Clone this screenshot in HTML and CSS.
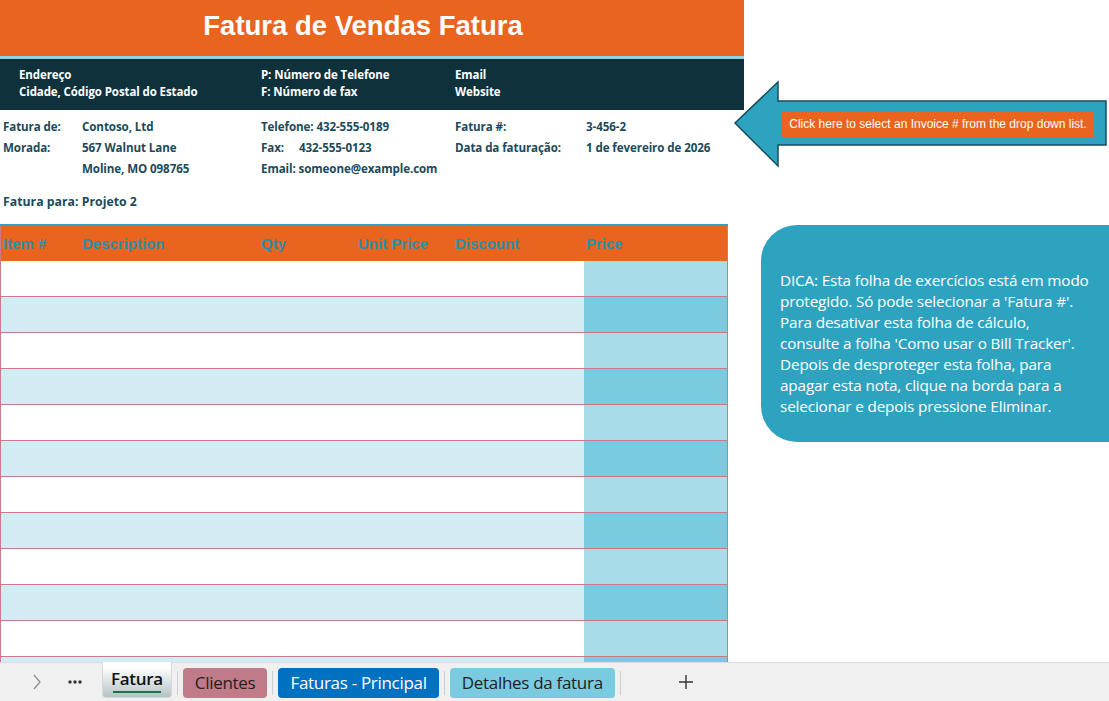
FILE: index.html
```html
<!DOCTYPE html>
<html>
<head>
  <meta charset="UTF-8">
  <title>Fatura de Vendas</title>
  <link rel="stylesheet" href="styles.css">
</head>
<body>

<div class="window">
  <div class="sheet-area">
    <div class="sheet">
      <div class="title-bar">Fatura de Vendas Fatura</div>

      <div class="company-band">
        <div class="band-col">
          <div>Endereço</div>
          <div>Cidade, Código Postal do Estado</div>
        </div>
        <div class="band-col">
          <div>P: Número de Telefone</div>
          <div>F: Número de fax</div>
        </div>
        <div class="band-col">
          <div>Email</div>
          <div>Website</div>
        </div>
      </div>

      <div class="info-grid">
        <div>Fatura de:</div>
        <div>Contoso, Ltd</div>
        <div>Telefone: 432-555-0189</div>
        <div>Fatura #:</div>
        <div>3-456-2</div>

        <div>Morada:</div>
        <div>567 Walnut Lane</div>
        <div><span class="fax-label">Fax:</span>432-555-0123</div>
        <div>Data da faturação:</div>
        <div>1 de fevereiro de 2026</div>

        <div></div>
        <div>Moline, MO 098765</div>
        <div>Email: someone@example.com</div>
        <div></div>
        <div></div>
      </div>

      <div class="bill-to">Fatura para: Projeto 2</div>

      <table class="items">
        <thead>
          <tr>
            <th class="c-item">Item #</th>
            <th class="c-desc">Description</th>
            <th class="c-qty">Qty</th>
            <th class="c-unit">Unit Price</th>
            <th class="c-disc">Discount</th>
            <th class="c-price">Price</th>
          </tr>
        </thead>
        <tbody>
          <tr><td></td><td></td><td></td><td></td><td></td><td class="price"></td></tr>
          <tr><td></td><td></td><td></td><td></td><td></td><td class="price"></td></tr>
          <tr><td></td><td></td><td></td><td></td><td></td><td class="price"></td></tr>
          <tr><td></td><td></td><td></td><td></td><td></td><td class="price"></td></tr>
          <tr><td></td><td></td><td></td><td></td><td></td><td class="price"></td></tr>
          <tr><td></td><td></td><td></td><td></td><td></td><td class="price"></td></tr>
          <tr><td></td><td></td><td></td><td></td><td></td><td class="price"></td></tr>
          <tr><td></td><td></td><td></td><td></td><td></td><td class="price"></td></tr>
          <tr><td></td><td></td><td></td><td></td><td></td><td class="price"></td></tr>
          <tr><td></td><td></td><td></td><td></td><td></td><td class="price"></td></tr>
          <tr><td></td><td></td><td></td><td></td><td></td><td class="price"></td></tr>
          <tr><td></td><td></td><td></td><td></td><td></td><td class="price"></td></tr>
        </tbody>
      </table>
    </div>

    <!-- shapes floating over the sheet -->
    <div class="arrow-shape">
      <svg width="376" height="88" viewBox="0 0 376 88">
        <polygon points="2,43 45,2 45,21 373,21 373,65 45,65 45,86" fill="#2ea3c0" stroke="#174c5c" stroke-width="1.5"/>
      </svg>
      <div class="arrow-label">Click here to select an Invoice # from the drop down list.</div>
    </div>

    <div class="tip-note">
      DICA: Esta folha de exercícios está em modo<br>
      protegido. Só pode selecionar a 'Fatura #'.<br>
      Para desativar esta folha de cálculo,<br>
      consulte a folha 'Como usar o Bill Tracker'.<br>
      Depois de desproteger esta folha, para<br>
      apagar esta nota, clique na borda para a<br>
      selecionar e depois pressione Eliminar.
    </div>
  </div>

  <div class="tab-bar">
    <span class="nav-btn">
      <svg width="10" height="16" viewBox="0 0 10 16"><polyline points="2,1 8,8 2,15" fill="none" stroke="#8a8a8a" stroke-width="1.2"/></svg>
    </span>
    <span class="nav-btn dots">
      <svg width="14" height="4" viewBox="0 0 14 4"><circle cx="2" cy="2" r="1.7" fill="#333"/><circle cx="7" cy="2" r="1.7" fill="#333"/><circle cx="12" cy="2" r="1.7" fill="#333"/></svg>
    </span>
    <span class="tab active">Fatura</span>
    <span class="tab-sep"></span>
    <span class="tab clientes">Clientes</span>
    <span class="tab-sep"></span>
    <span class="tab principal">Faturas - Principal</span>
    <span class="tab-sep"></span>
    <span class="tab detalhes">Detalhes da fatura</span>
    <span class="tab-sep"></span>
    <span class="add-btn">
      <svg width="16" height="16" viewBox="0 0 16 16"><path d="M8 1v14M1 8h14" stroke="#333" stroke-width="1.4"/></svg>
    </span>
  </div>
</div>

</body>
</html>
```

FILE: styles.css
```css
/* Page frame - sheet on top, sheet tabs at the bottom */
body {
	margin: 0;
	background: white;
	font-family: "Open Sans", "Noto Sans", sans-serif;
}

.window {
	width: 1109px;
	height: 701px;
	display: flex;
	flex-direction: column;
	overflow: hidden;
}

.sheet-area {
	position: relative;
	flex: 1;
	overflow: hidden;
}

.sheet {
	width: 744px;
}

/* Orange title */
.title-bar {
	height: 56px;
	background-color: #e9641e;
	color: white;
	font-family: "Liberation Sans", Arial, sans-serif;
	font-weight: bold;
	font-size: 27.5px;
	line-height: 52px;
	text-align: center;
	padding-right: 18px;
	border-bottom: 3px solid #8fd4e4;
}

/* Dark company band */
.company-band {
	height: 51px;
	box-sizing: border-box;
	background-color: #0e313b;
	color: white;
	font-size: 11.5px;
	font-weight: 700;
	line-height: 17px;
	padding: 7px 0 0 19px;
	display: grid;
	grid-template-columns: 242px 194px 1fr;
	letter-spacing: -0.1px;
}

/* From / invoice info */
.info-grid {
	display: grid;
	grid-template-columns: 79px 179px 194px 131px 1fr;
	padding: 6px 0 0 3px;
	color: #1b4a5a;
	font-size: 11.6px;
	font-weight: 700;
	line-height: 21px;
	letter-spacing: -0.1px;
}

.fax-label {
	display: inline-block;
	width: 38px;
}

.bill-to {
	padding: 12px 0 0 3px;
	color: #1b4a5a;
	font-size: 12.3px;
	font-weight: 700;
	line-height: 22px;
	height: 22px;
	margin-bottom: 11px;
}

/* Items table */
.items {
	width: 728px;
	border-collapse: collapse;
	table-layout: fixed;
	border-top: 2px solid #2ea3c0;
}

.items th {
	box-sizing: border-box;
	height: 36px;
	padding: 0 0 0 1px;
	background-color: #e9641e;
	color: #2e8fa8;
	font-family: "Liberation Sans", Arial, sans-serif;
	font-weight: bold;
	font-size: 15px;
	text-align: left;
	border-left: 1px solid #e9641e;
}

.items th:first-child {
	border-left: 1px solid #c97a8a;
	padding-left: 2px;
}

.items th:last-child {
	border-right: 1px solid #c97a8a;
	padding-left: 2px;
}

.c-item { width: 80px; }
.c-desc { width: 179px; }
.c-qty { width: 97px; }
.c-unit { width: 97px; }
.c-disc { width: 130px; }

.items td {
	height: 35px;
	padding: 0;
	border-bottom: 1px solid #c97a8a;
}

.items td:first-child {
	border-left: 1px solid #c97a8a;
}

.items td.price {
	border-right: 1px solid #c97a8a;
	background-color: #a8dce9;
}

.items tbody tr:nth-child(even) td {
	background-color: #d3ecf3;
}

.items tbody tr:nth-child(even) td.price {
	background-color: #7acbe0;
}

/* Arrow callout */
.arrow-shape {
	position: absolute;
	left: 733px;
	top: 80px;
	width: 376px;
	height: 88px;
}

.arrow-shape svg {
	display: block;
}

.arrow-label {
	position: absolute;
	left: 49px;
	top: 32px;
	width: 312px;
	height: 25px;
	background-color: #e9641e;
	color: white;
	font-family: "Liberation Sans", Arial, sans-serif;
	font-size: 12px;
	line-height: 25px;
	text-align: center;
}

/* Tip note */
.tip-note {
	position: absolute;
	left: 761px;
	top: 225px;
	width: 384px;
	height: 217px;
	box-sizing: border-box;
	padding: 45px 0 0 19px;
	border-radius: 36px;
	background-color: #2ea3bf;
	color: white;
	font-size: 15.3px;
	line-height: 21px;
	letter-spacing: -0.15px;
	white-space: nowrap;
}

/* Sheet tabs */
.tab-bar {
	height: 39px;
	box-sizing: border-box;
	background-color: #f0f0f0;
	border-top: 1px solid #dcdcdc;
	display: flex;
	align-items: flex-start;
	font-family: "Open Sans", "Noto Sans", sans-serif;
	font-size: 17px;
	letter-spacing: -0.3px;
}

.nav-btn {
	width: 38px;
	height: 38px;
	display: flex;
	align-items: center;
	justify-content: center;
	margin-left: 18px;
}

.nav-btn.dots {
	margin-left: 0;
	width: 38px;
}

.tab {
	height: 30px;
	line-height: 29px;
	padding: 0 12px;
	border-radius: 4px;
	margin-top: 5px;
	color: #222;
}

.tab.active {
	height: 36px;
	margin-top: -1px;
	margin-left: 8px;
	box-sizing: border-box;
	padding: 0 8px;
	line-height: 33px;
	font-weight: 600;
	color: #111;
	background: linear-gradient(#ffffff 15%, #b4c3c6);
	border: 1px solid #d8d8d8;
	border-top: none;
	border-radius: 0 0 4px 4px;
	position: relative;
}

.tab.active::after {
	content: "";
	position: absolute;
	left: 10px;
	right: 10px;
	bottom: 4px;
	height: 2px;
	background-color: #1e7145;
}

.tab.clientes {
	background-color: #c07a88;
}

.tab.principal {
	background-color: #0070c0;
	color: white;
}

.tab.detalhes {
	background-color: #7acbe0;
}

.tab-sep {
	width: 1px;
	height: 24px;
	margin: 8px 5px 0;
	background-color: #cfcfcf;
}

.add-btn {
	margin-left: 52px;
	height: 38px;
	display: flex;
	align-items: center;
}
```
